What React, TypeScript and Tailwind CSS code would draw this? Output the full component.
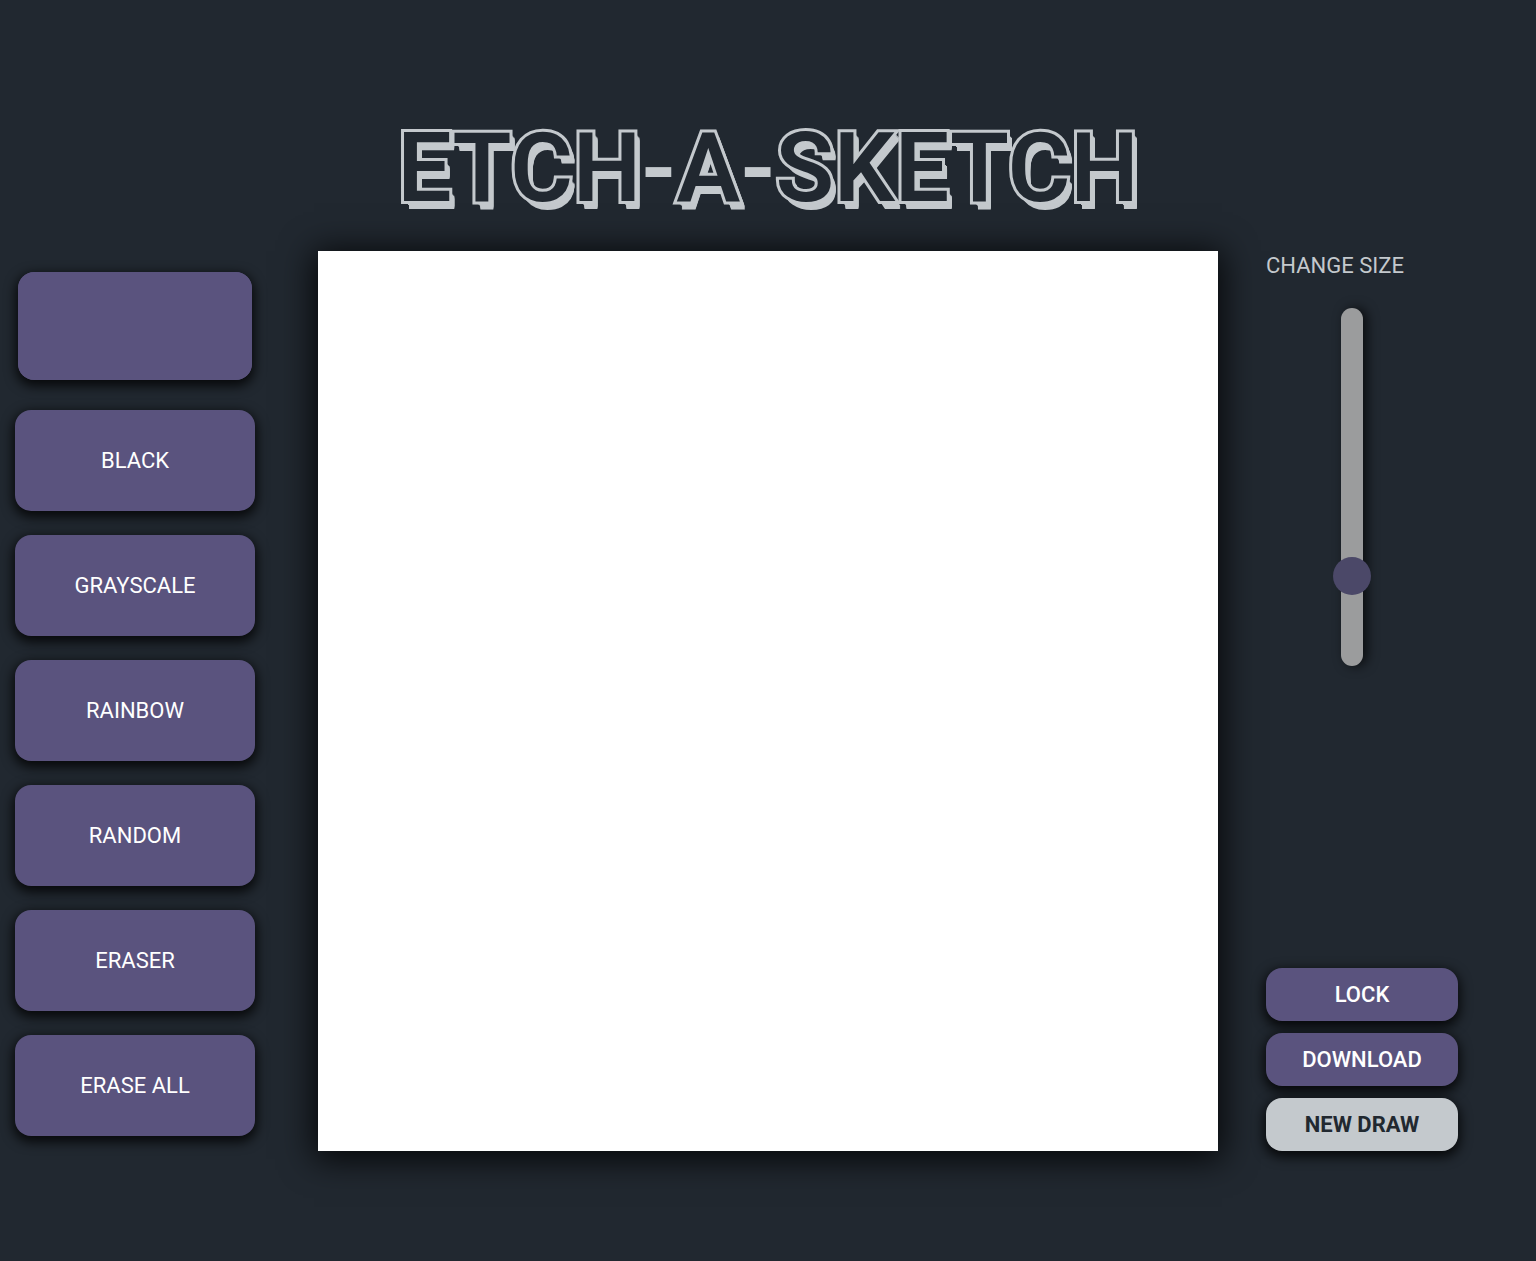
import { useState } from "react";

const modes = ["BLACK", "GRAYSCALE", "RAINBOW", "RANDOM", "ERASER", "ERASE ALL"];

const labelFont = "font-['Roboto',sans-serif] text-[22px]";
const raised = "rounded-2xl shadow-[0_4px_12px_2px_rgba(0,0,0,0.8)]";

function ModeButton({ label }: { label: string }) {
  return (
    <button type="button" className={`h-[101px] w-full bg-[#5a537e] text-white ${labelFont} ${raised}`}>
      {label}
    </button>
  );
}

function ActionButton({ label, light = false }: { label: string; light?: boolean }) {
  const tone = light ? "bg-[#c4c9cd] text-[#212830] font-bold" : "bg-[#5a537e] text-white font-medium";
  return (
    <button type="button" className={`h-[53px] w-48 ${tone} ${labelFont} ${raised}`}>
      {label}
    </button>
  );
}

function Dash() {
  return <span className="text-[#c4c9cd] [-webkit-text-stroke:0px] [text-shadow:none]">-</span>;
}

export default function App() {
  const [color, setColor] = useState("#5a537e");
  const [size, setSize] = useState(15);

  return (
    <div className="min-h-screen bg-[#212830] pt-[108px] pb-[110px]">
      <h1 className="mb-[23px] text-center font-['Roboto',sans-serif] text-8xl leading-[120px] font-semibold text-[#212830] [paint-order:stroke_fill] [-webkit-text-stroke:6px_#c4c9cd] [text-shadow:1px_1px_#c4c9cd,2px_2px_#c4c9cd,3px_3px_#c4c9cd,4px_4px_#c4c9cd,5px_5px_#c4c9cd,5px_6px_#c4c9cd,5px_7px_#c4c9cd,5px_8px_#c4c9cd]">
        ETCH
        <Dash />A<Dash />
        SKETCH
      </h1>

      <main className="grid grid-cols-[minmax(270px,1fr)_minmax(0,900px)_minmax(256px,1fr)]">
        <section aria-label="Pen modes" className="ml-[15px] flex w-60 flex-col gap-6 pt-[21px]">
          <input
            type="color"
            aria-label="Pen colour"
            value={color}
            onChange={(e) => setColor(e.target.value)}
            className={`mx-auto mb-1.5 block h-[108px] w-[234px] shrink-0 appearance-none bg-[#5a537e] p-0 [&::-webkit-color-swatch]:rounded-2xl [&::-webkit-color-swatch]:border-0 [&::-webkit-color-swatch-wrapper]:p-0 ${raised}`}
          />
          {modes.map((mode) => (
            <ModeButton key={mode} label={mode} />
          ))}
        </section>

        <div role="img" aria-label="Drawing board" className="aspect-square w-full bg-white shadow-[0_4px_32px_4px_rgba(0,0,0,0.85)]" />

        <section aria-label="Board controls" className="flex flex-col items-start justify-between pl-12">
          <div className="flex flex-col items-start">
            <label htmlFor="size" className={`leading-[30px] text-[#c4c9cd] ${labelFont}`}>
              CHANGE SIZE
            </label>
            <input
              id="size"
              type="range"
              min={1}
              max={64}
              value={size}
              onChange={(e) => setSize(Number(e.target.value))}
              className="mt-[27px] ml-[67px] h-[358px] w-[38px] appearance-none bg-transparent [direction:rtl] [writing-mode:vertical-lr] [&::-webkit-slider-runnable-track]:mx-auto [&::-webkit-slider-runnable-track]:h-full [&::-webkit-slider-runnable-track]:w-[22px] [&::-webkit-slider-runnable-track]:rounded-full [&::-webkit-slider-runnable-track]:bg-[#9b9c9d] [&::-webkit-slider-runnable-track]:shadow-[4px_0_12px_rgba(0,0,0,0.7)] [&::-webkit-slider-thumb]:-ml-2 [&::-webkit-slider-thumb]:size-[38px] [&::-webkit-slider-thumb]:appearance-none [&::-webkit-slider-thumb]:rounded-full [&::-webkit-slider-thumb]:bg-[#4b4868]"
            />
          </div>
          <div className="flex flex-col gap-3">
            <ActionButton label="LOCK" />
            <ActionButton label="DOWNLOAD" />
            <ActionButton label="NEW DRAW" light />
          </div>
        </section>
      </main>
    </div>
  );
}
